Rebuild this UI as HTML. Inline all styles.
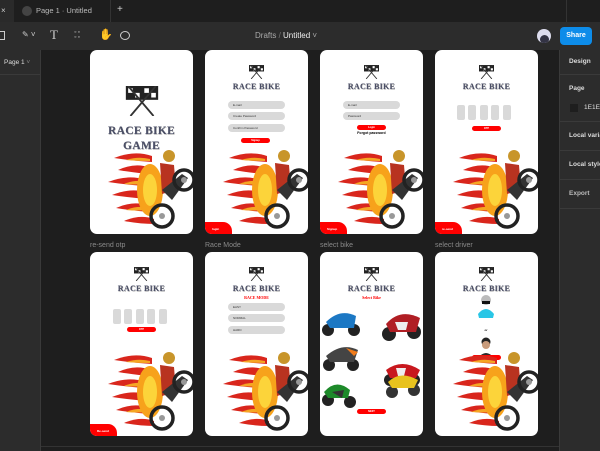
<!DOCTYPE html>
<html><head><meta charset="utf-8"><style>
*{margin:0;padding:0;box-sizing:border-box}
body{width:600px;height:451px;background:#1e1e1e;position:relative;overflow:hidden;font-family:"Liberation Sans",sans-serif}
.a{position:absolute}
.card{position:absolute;width:103px;height:184px;background:#fff;border-radius:7px;overflow:hidden}
.t{position:absolute;left:0;width:103px;text-align:center;font-family:"Liberation Serif",serif;font-weight:bold;color:#4a4e66;text-shadow:0.5px 0.5px 0 #999;font-size:8px;letter-spacing:.3px}
.inp{position:absolute;left:23px;width:57px;height:8px;background:#d9d9d9;border-radius:4px;font-size:3px;color:#333;padding-left:5px;line-height:8px}
.btn{position:absolute;width:29px;height:5px;background:#f00;border-radius:3px;font-size:2.5px;color:#fff;text-align:center;line-height:5px;font-weight:bold}
.tab{position:absolute;left:0;bottom:0;width:27px;height:12px;background:#f00;border-top-right-radius:9px;font-size:3px;color:#fff;font-weight:bold;padding:5px 0 0 7px}
.box{position:absolute;width:8px;height:15px;background:#d9d9d9;border-radius:2px}
.lbl{position:absolute;font-size:7px;color:#8a8a8a}
.rp{position:absolute;left:559px;top:50px;width:41px;height:401px;background:#2c2c2c;border-left:1px solid #3a3a3a;overflow:hidden}
.side{color:#ddd;font-size:6.5px;font-weight:bold;position:absolute;left:9px;white-space:nowrap}
.hr{position:absolute;left:0;width:41px;height:1px;background:#3a3a3a}
.red{position:absolute;left:0;width:103px;text-align:center;color:#f00;font-weight:bold;font-size:4px;font-family:"Liberation Serif",serif}
</style></head><body>
<svg width="0" height="0" style="position:absolute">
<defs>
<g id="fb">
<g fill="#d9261c">
<path d="M24 108 Q44 100 62 106 L62 112 Q44 111 24 108Z"/>
<path d="M28 120 Q46 112 60 118 L60 124 Q46 123 28 120Z"/>
<path d="M18 132 Q38 124 56 130 L56 136 Q38 135 18 132Z"/>
<path d="M22 145 Q42 137 58 143 L58 149 Q42 148 22 145Z"/>
<path d="M26 158 Q44 150 60 156 L60 162 Q44 161 26 158Z"/>
<path d="M34 171 Q50 164 64 169 L64 174 Q50 174 34 171Z"/>
</g>
<g fill="#f5a623">
<path d="M36 110 Q48 106 60 109 L60 111 Q48 111 36 110Z"/>
<path d="M34 134 Q46 129 56 132 L56 134 Q46 135 34 134Z"/>
<path d="M36 160 Q48 155 60 158 L60 160 Q48 161 36 160Z"/>
</g>
<ellipse cx="60" cy="140" rx="13" ry="26" fill="#f7a21b"/>
<ellipse cx="60" cy="140" rx="7" ry="16" fill="#fcd43a"/>
<circle cx="79" cy="106" r="6" fill="#c8952a"/>
<path d="M70 113 L84 115 L86 140 L72 144Z" fill="#b83320"/>
<path d="M72 140 L92 124 L98 128 L82 150Z" fill="#333"/>
<circle cx="94" cy="130" r="10" fill="none" stroke="#222" stroke-width="3.5"/>
<circle cx="72" cy="166" r="11" fill="none" stroke="#222" stroke-width="3.5"/>
<circle cx="94" cy="130" r="3" fill="#999"/>
<circle cx="72" cy="166" r="3" fill="#999"/>
</g>
<g id="fl">
<rect x="0" y="0" width="7" height="6" fill="#222"/><rect x="7" y="0" width="7" height="6" fill="#222"/>
<path d="M1 1h2v2h-2zM4 3h2v2h-2zM8 1h2v2h-2zM11 3h2v2h-2z" fill="#fff"/>
<path d="M1 0 L12 13 M13 0 L2 13" stroke="#333" stroke-width=".8"/>
</g>
</defs></svg>

<div class="a" style="left:0;top:0;width:600px;height:22px;background:#1e1e1e"></div>
<div class="a" style="left:0;top:0;width:14px;height:22px;background:#2a2a2a;color:#ccc;font-size:8px;line-height:22px;padding-left:1px">×</div>
<div class="a" style="left:22px;top:6px;width:10px;height:10px;border-radius:50%;background:#444"></div>
<div class="a" style="left:36px;top:6px;font-size:7.5px;color:#bbb">Page 1 · Untitled</div>
<div class="a" style="left:110px;top:0;width:1px;height:22px;background:#333"></div>
<div class="a" style="left:117px;top:4px;font-size:10px;color:#ccc">+</div>
<div class="a" style="left:566px;top:0;width:1px;height:22px;background:#333"></div>
<div class="a" style="left:0;top:22px;width:600px;height:28px;background:#2c2c2c"></div>
<div class="a" style="left:0;top:31px;width:5px;height:9px;border:1px solid #ccc;border-left:none"></div>
<div class="a" style="left:22px;top:30px;font-size:8px;color:#ccc">✎ ˅</div>
<div class="a" style="left:50px;top:27px;font-family:'Liberation Serif',serif;font-size:13px;color:#ccc">T</div>
<div class="a" style="left:74px;top:30px;font-size:7px;color:#ccc;letter-spacing:1px;line-height:5px">◦◦<br>◦◦</div>
<div class="a" style="left:99px;top:28px;font-size:11px;color:#ccc">✋</div>
<div class="a" style="left:120px;top:31px;width:10px;height:9px;border:1.2px solid #ccc;border-radius:50%"></div>
<div class="a" style="left:255px;top:31px;font-size:8px;color:#aaa">Drafts <span style="color:#777">/</span> <span style="color:#eee">Untitled</span> <span style="color:#aaa">˅</span></div>
<div class="a" style="left:537px;top:29px;width:14px;height:14px;border-radius:50%;background:#dde;overflow:hidden"><div style="margin:6px auto 0;width:9px;height:9px;border-radius:50%;background:#334"></div></div>
<div class="a" style="left:560px;top:27px;width:32px;height:18px;border-radius:4px;background:#0d8ce9;color:#fff;font-size:7px;font-weight:bold;text-align:center;line-height:18px">Share</div>
<div class="a" style="left:0;top:50px;width:41px;height:401px;background:#2c2c2c;border-right:1px solid #3a3a3a"></div>
<div class="a" style="left:0;top:74px;width:41px;height:1px;background:#3a3a3a"></div>
<div class="a" style="left:4px;top:59px;font-size:6.5px;color:#ddd">Page 1 <span style="color:#888">˅</span></div>
<div class="rp">
<div class="side" style="top:8px">Design</div>
<div class="hr" style="top:24px"></div>
<div class="side" style="top:35px">Page</div>
<div class="a" style="left:10px;top:54px;width:8px;height:8px;background:#1e1e1e"></div>
<div class="side" style="left:24px;top:54px;font-weight:normal">1E1E1E</div>
<div class="hr" style="top:71px"></div>
<div class="side" style="top:82px">Local variables</div>
<div class="hr" style="top:100px"></div>
<div class="side" style="top:111px">Local styles</div>
<div class="hr" style="top:129px"></div>
<div class="side" style="top:140px;color:#bbb">Export</div>
<div class="hr" style="top:158px"></div>
</div>
<div class="a" style="left:41px;top:446px;width:518px;height:1px;background:#333"></div>

<div class="card" style="left:90px;top:50px">
<svg class="a" style="left:30px;top:36px" width="44" height="30" viewBox="0 0 14 13"><use href="#fl"/></svg>
<div class="t" style="top:74px;font-size:11.5px;line-height:15px">RACE BIKE<br>GAME</div>
<svg class="a" style="left:0;top:0" width="103" height="184"><use href="#fb"/></svg>
</div>
<div class="card" style="left:205px;top:50px">
<svg class="a" style="left:44px;top:15px" width="15" height="14" viewBox="0 0 14 13"><use href="#fl"/></svg>
<div class="t" style="top:32px">RACE BIKE</div>
<div class="inp" style="top:51px">E-mail</div><div class="inp" style="top:62px">Create Password</div><div class="inp" style="top:74px">Confirm Password</div>
<div class="btn" style="left:36px;top:88px">Signup</div>
<svg class="a" style="left:0;top:0" width="103" height="184"><use href="#fb"/></svg>
<div class="tab">login</div>
</div>
<div class="card" style="left:320px;top:50px">
<svg class="a" style="left:44px;top:15px" width="15" height="14" viewBox="0 0 14 13"><use href="#fl"/></svg>
<div class="t" style="top:32px">RACE BIKE</div>
<div class="inp" style="top:51px">E-mail</div><div class="inp" style="top:62px">Password</div>
<div class="btn" style="left:37px;top:75px">Login</div>
<div class="a" style="left:0;width:103px;top:81px;text-align:center;font-size:3.5px;font-weight:bold">Forgot password</div>
<svg class="a" style="left:0;top:0" width="103" height="184"><use href="#fb"/></svg>
<div class="tab">Signup</div>
</div>
<div class="card" style="left:435px;top:50px">
<svg class="a" style="left:44px;top:15px" width="15" height="14" viewBox="0 0 14 13"><use href="#fl"/></svg>
<div class="t" style="top:32px">RACE BIKE</div>
<div class="box" style="left:22px;top:55px"></div><div class="box" style="left:33px;top:55px"></div><div class="box" style="left:45px;top:55px"></div><div class="box" style="left:56px;top:55px"></div><div class="box" style="left:68px;top:55px"></div>
<div class="btn" style="left:37px;top:76px">OTP</div>
<svg class="a" style="left:0;top:0" width="103" height="184"><use href="#fb"/></svg>
<div class="tab">re-send</div>
</div>

<div class="lbl" style="left:90px;top:242px">re-send otp</div>
<div class="lbl" style="left:205px;top:242px">Race Mode</div>
<div class="lbl" style="left:320px;top:242px">select bike</div>
<div class="lbl" style="left:435px;top:242px">select driver</div>

<div class="card" style="left:90px;top:252px">
<svg class="a" style="left:44px;top:15px" width="15" height="14" viewBox="0 0 14 13"><use href="#fl"/></svg>
<div class="t" style="top:32px">RACE BIKE</div>
<div class="box" style="left:23px;top:57px"></div><div class="box" style="left:34px;top:57px"></div><div class="box" style="left:46px;top:57px"></div><div class="box" style="left:57px;top:57px"></div><div class="box" style="left:69px;top:57px"></div>
<div class="btn" style="left:37px;top:75px">OTP</div>
<svg class="a" style="left:0;top:0" width="103" height="184"><use href="#fb"/></svg>
<div class="tab">Re-send</div>
</div>
<div class="card" style="left:205px;top:252px">
<svg class="a" style="left:44px;top:15px" width="15" height="14" viewBox="0 0 14 13"><use href="#fl"/></svg>
<div class="t" style="top:32px">RACE BIKE</div>
<div class="red" style="top:43px">RACE MODE</div>
<div class="inp" style="top:51px">EASY</div><div class="inp" style="top:62px">NORMAL</div><div class="inp" style="top:74px">HARD</div>
<svg class="a" style="left:0;top:0" width="103" height="184"><use href="#fb"/></svg>
</div>
<div class="card" style="left:320px;top:252px">
<svg class="a" style="left:44px;top:15px" width="15" height="14" viewBox="0 0 14 13"><use href="#fl"/></svg>
<div class="t" style="top:32px">RACE BIKE</div>
<div class="red" style="top:43px">Select Bike</div>
<svg class="a" style="left:0;top:0" width="103" height="184">
<g><circle cx="8" cy="78" r="6" fill="#222"/><circle cx="34" cy="78" r="6" fill="#222"/><path d="M6 70 Q20 56 36 64 L34 76 L10 76Z" fill="#1c78c4"/></g>
<g><circle cx="69" cy="82" r="7" fill="#222"/><circle cx="94" cy="80" r="7" fill="#222"/><path d="M66 72 Q80 56 100 66 L96 80 L70 80Z" fill="#b01e24"/><path d="M75 70 L88 70 L86 78 L78 78Z" fill="#eee"/></g>
<g><circle cx="9" cy="113" r="6" fill="#222"/><circle cx="33" cy="113" r="6" fill="#222"/><path d="M6 104 Q22 90 38 98 L34 110 L10 110Z" fill="#444"/><path d="M26 96 L38 100 L34 104Z" fill="#f07b1a"/></g>
<g><circle cx="70" cy="128" r="6" fill="#222"/><circle cx="94" cy="128" r="6" fill="#222"/><path d="M66 118 Q82 106 100 118 L96 126 L70 126Z" fill="#c8181e"/><path d="M76 116 L86 116 L84 124 L78 124Z" fill="#eee"/></g>
<g><circle cx="8" cy="148" r="6" fill="#222"/><circle cx="30" cy="150" r="6" fill="#222"/><path d="M4 140 Q16 126 30 138 L28 146 L8 146Z" fill="#1d8a2a"/><path d="M12 140 L24 138 L22 146Z" fill="#333"/></g>
<g><circle cx="72" cy="140" r="6" fill="#333"/><circle cx="94" cy="138" r="6" fill="#333"/><path d="M68 130 Q80 118 98 128 L94 136 L72 136Z" fill="#e8c21e"/></g>
</svg>
<div class="btn" style="left:37px;top:157px">NEXT</div>
</div>
<div class="card" style="left:435px;top:252px">
<svg class="a" style="left:44px;top:15px" width="15" height="14" viewBox="0 0 14 13"><use href="#fl"/></svg>
<div class="t" style="top:32px">RACE BIKE</div>
<svg class="a" style="left:0;top:0" width="103" height="184">
<circle cx="51" cy="48" r="5" fill="#bbb"/><rect x="47" y="49" width="8" height="3" fill="#111"/><path d="M43 62 Q51 52 59 62 L58 66 L44 66Z" fill="#29c6e6"/>
<text x="51" y="79" font-size="3" text-anchor="middle" font-family="Liberation Sans" font-weight="bold">or</text>
<circle cx="51" cy="90" r="4.5" fill="#222"/><circle cx="51" cy="93" r="4" fill="#c89b7b"/><path d="M43 106 Q51 96 59 106 L58 110 L44 110Z" fill="#2a2a2a"/>
</svg>
<div class="btn" style="left:37px;top:103px">Select</div>
<svg class="a" style="left:0;top:0" width="103" height="184"><use href="#fb"/></svg>
</div>
</body></html>
